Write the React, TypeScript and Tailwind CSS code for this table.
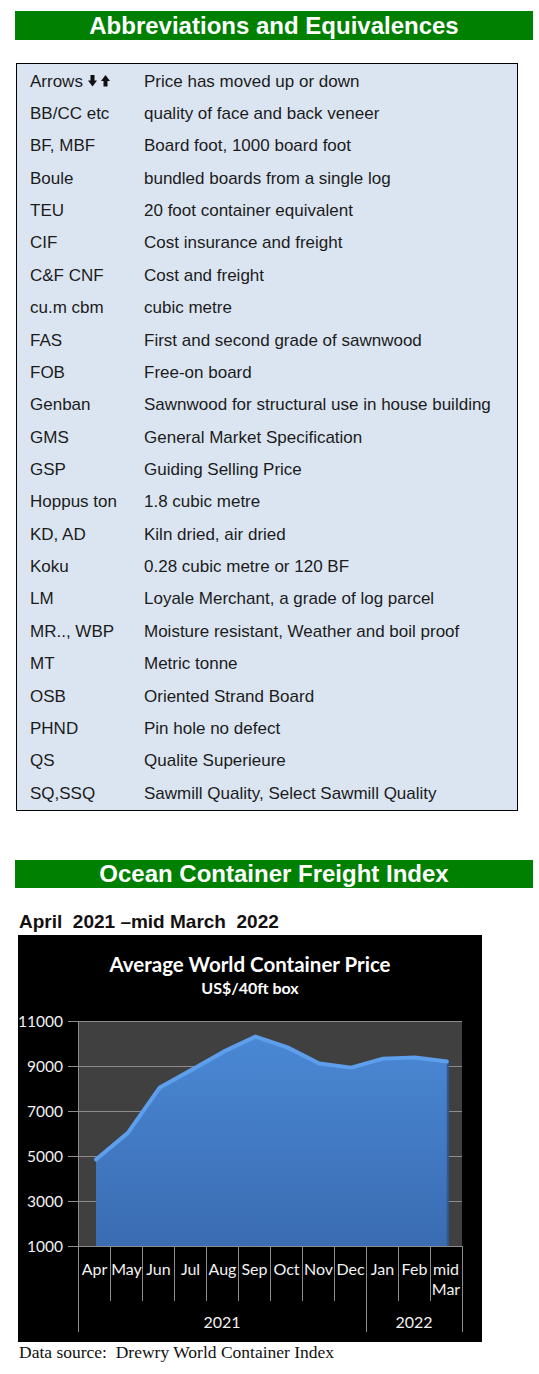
import React from "react";

const rows: [string, string][] = [
  ["Arrows", "Price has moved up or down"],
  ["BB/CC etc", "quality of face and back veneer"],
  ["BF, MBF", "Board foot, 1000 board foot"],
  ["Boule", "bundled boards from a single log"],
  ["TEU", "20 foot container equivalent"],
  ["CIF", "Cost insurance and freight"],
  ["C&F CNF", "Cost and freight"],
  ["cu.m cbm", "cubic metre"],
  ["FAS", "First and second grade of sawnwood"],
  ["FOB", "Free-on board"],
  ["Genban", "Sawnwood for structural use in house building"],
  ["GMS", "General Market Specification"],
  ["GSP", "Guiding Selling Price"],
  ["Hoppus ton", "1.8 cubic metre"],
  ["KD, AD", "Kiln dried, air dried"],
  ["Koku", "0.28 cubic metre or 120 BF"],
  ["LM", "Loyale Merchant, a grade of log parcel"],
  ["MR.., WBP", "Moisture resistant, Weather and boil proof"],
  ["MT", "Metric tonne"],
  ["OSB", "Oriented Strand Board"],
  ["PHND", "Pin hole no defect"],
  ["QS", "Qualite Superieure"],
  ["SQ,SSQ", "Sawmill Quality, Select Sawmill Quality"],
];

const months = ["Apr", "May", "Jun", "Jul", "Aug", "Sep", "Oct", "Nov", "Dec", "Jan", "Feb"];
const values = [4870, 6050, 8070, 8850, 9660, 10330, 9850, 9130, 8950, 9350, 9400, 9220];
const FONT = "Lato, 'Open Sans', sans-serif";

function Arrows() {
  return (
    <svg width="22" height="12" viewBox="0 0 22 12" className="inline-block ml-[5px] align-[0px]">
      <path d="M2.5 0 H6.5 V5.5 H9 L4.5 11.5 L0 5.5 H2.5 Z" fill="#111" />
      <path d="M17.5 0 L22 6 H19.5 V11.5 H15.5 V6 H13 Z" fill="#111" />
    </svg>
  );
}

function Chart() {
  const x0 = 78;
  const step = 31.9;
  const yOf = (v: number) => 248 - (v - 1000) * 0.0225;
  const pts = values.map((v, i) => [x0 + step * i, yOf(v)] as [number, number]);
  const top = pts.map((p) => `${p[0]},${p[1]}`).join(" ");
  const area = `${x0},248 ${top} ${pts[pts.length - 1][0]},248`;
  const grid = [23, 68, 113, 158, 203, 248];
  const labels = ["11000", "9000", "7000", "5000", "3000", "1000"];
  return (
    <svg width="464" height="344" viewBox="0 0 464 344" className="block">
      <defs>
        <linearGradient id="fill" x1="0" y1="0" x2="0" y2="1">
          <stop offset="0" stopColor="#4a88d4" />
          <stop offset="1" stopColor="#3a6cb2" />
        </linearGradient>
      </defs>
      <rect x="60" y="23" width="384" height="225" fill="#404040" />
      {grid.map((g, i) => (
        <g key={i}>
          <line x1="50" x2="444" y1={g + 0.5} y2={g + 0.5} stroke="#8c8c8c" strokeWidth="1" />
          <text x="45" y={g + 5.5} textAnchor="end" fill="#f2f2f2" fontSize="15.5" fontFamily={FONT}>
            {labels[i]}
          </text>
        </g>
      ))}
      <polygon points={area} fill="url(#fill)" />
      <polygon
        points={`${pts[11][0]},${pts[11][1]} ${pts[11][0] + 2},${pts[11][1] + 2} ${pts[11][0] + 2},248 ${pts[11][0]},248`}
        fill="#2e5a96"
      />
      <polyline
        points={top}
        fill="none"
        stroke="#5d9fec"
        strokeWidth="4"
        strokeLinejoin="round"
        strokeLinecap="round"
        transform="translate(0,0.5)"
      />
      <line x1="60.5" x2="60.5" y1="23" y2="248" stroke="#8c8c8c" />
      <line x1="60" x2="444" y1="248.5" y2="248.5" stroke="#8c8c8c" />
      {Array.from({ length: 13 }).map((_, k) => {
        const x = 60 + 32 * k + 0.5;
        const long = k === 0 || k === 9 || k === 12;
        return <line key={k} x1={x} x2={x} y1="248" y2={long ? 334 : 303} stroke="#8c8c8c" />;
      })}
      {months.map((m, i) => (
        <text key={m} x={76.5 + 32 * i} y="277" textAnchor="middle" fill="#f2f2f2" fontSize="16" fontFamily={FONT}>
          {m}
        </text>
      ))}
      <text x="428" y="277" textAnchor="middle" fill="#f2f2f2" fontSize="16" fontFamily={FONT}>
        mid
      </text>
      <text x="428" y="297" textAnchor="middle" fill="#f2f2f2" fontSize="16" fontFamily={FONT}>
        Mar
      </text>
      <text x="204" y="330" textAnchor="middle" fill="#f2f2f2" fontSize="16" fontFamily={FONT}>
        2021
      </text>
      <text x="396" y="330" textAnchor="middle" fill="#f2f2f2" fontSize="16" fontFamily={FONT}>
        2022
      </text>
    </svg>
  );
}

export default function App() {
  return (
    <div className="w-[539px] bg-white pt-[11px] pb-[12px] font-['Liberation_Sans',Arial,sans-serif]">
      <div className="ml-[15px] w-[518px] h-[29px] bg-[#008000] flex items-center justify-center text-white font-bold text-[24px] leading-none">
        Abbreviations and Equivalences
      </div>

      <div className="ml-[16px] mt-[23px] w-[502px] border border-black bg-[#dbe5f1] py-[1px] text-[17px] text-[#1c1c1c]">
        {rows.map(([a, b]) => (
          <div key={a} className="h-[32.36px] flex items-center leading-none">
            <div className="w-[127px] pl-[13px] shrink-0 whitespace-nowrap flex items-center">
              {a}
              {a === "Arrows" && <Arrows />}
            </div>
            <div className="whitespace-nowrap">{b}</div>
          </div>
        ))}
      </div>

      <div className="ml-[15px] mt-[49px] w-[518px] h-[28px] bg-[#008000] flex items-center justify-center text-white font-bold text-[24px] leading-none">
        Ocean Container Freight Index
      </div>

      <div className="ml-[19px] mt-[22px] leading-[24px] text-[19px] font-bold text-[#141010] whitespace-pre">
        {"April  2021 \u2013mid March  2022"}
      </div>

      <div className="ml-[18px] mt-[1px] w-[464px] h-[407px] bg-black flex flex-col items-center font-['Lato','Open_Sans',sans-serif] text-white">
        <div className="mt-[17px] leading-[24px] text-[20.5px] font-bold">Average World Container Price</div>
        <div className="mt-[2px] leading-[20px] text-[16px] font-bold">US$/40ft box</div>
        <Chart />
      </div>

      <div className="ml-[19px] leading-[20px] text-[17.5px] text-[#111] font-['Liberation_Serif','Times_New_Roman',serif] whitespace-pre">
        {"Data source:  Drewry World Container Index"}
      </div>
    </div>
  );
}
